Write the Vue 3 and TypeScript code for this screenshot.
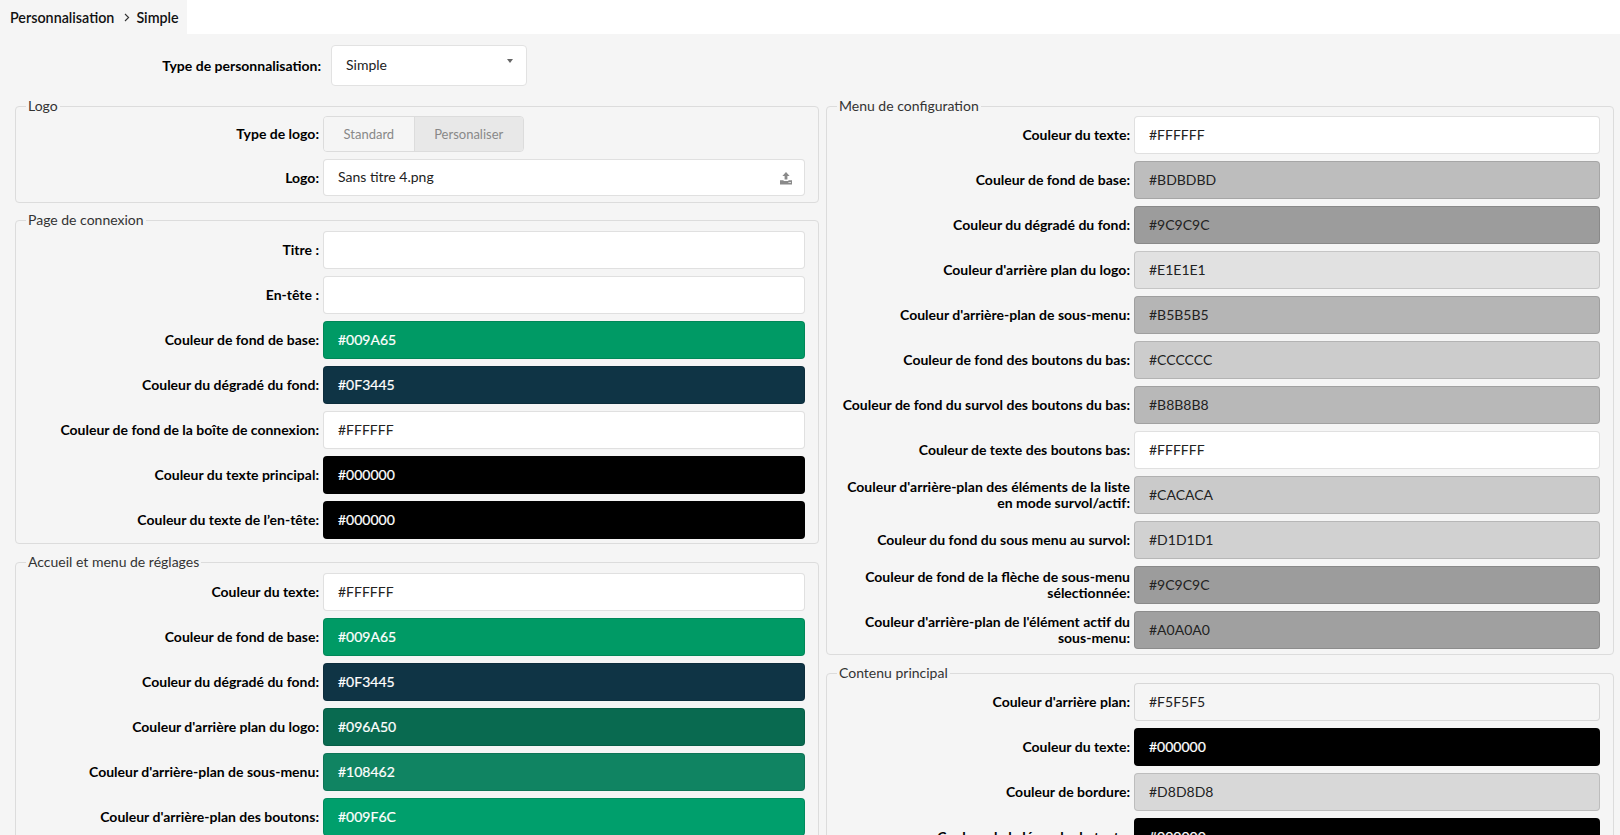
<template>
  <div class="page">
    <div class="topbar">
      <div class="crumbs">
        <span>Personnalisation</span>
        <svg class="crumbs__sep" width="6" height="9" viewBox="0 0 6 9">
          <path d="M1 1 L4.6 4.5 L1 8" fill="none" stroke="#333" stroke-width="1.1" />
        </svg>
        <span>Simple</span>
      </div>
    </div>

    <div class="type-row">
      <label class="type-row__label">Type de personnalisation:</label>
      <div class="select">
        <span>Simple</span>
        <i class="select__caret"></i>
      </div>
    </div>

    <div class="columns">
      <div class="column">
        <fieldset class="group group--logo">
          <legend>Logo</legend>
          <div class="row row--switch">
            <label>Type de logo:</label>
            <div class="switch">
              <span class="switch__item">Standard</span>
              <span class="switch__item switch__item--active">Personaliser</span>
            </div>
          </div>
          <div class="row">
            <label>Logo:</label>
            <div class="field field--file">
              <span>Sans titre 4.png</span>
              <svg class="upload" width="14" height="14" viewBox="0 0 14 14">
                <path d="M7 1 L10.6 5 H8.4 V8.6 H5.6 V5 H3.4 Z" fill="#8a8a8a" />
                <path d="M1 9.2 H4.6 V10 H9.4 V9.2 H13 V13.4 H1 Z" fill="#8a8a8a" />
                <rect x="9.4" y="11" width="2.6" height="0.9" fill="#e4e4e4" />
              </svg>
            </div>
          </div>
        </fieldset>

        <fieldset v-for="group in leftGroups" :key="group.title" class="group group--tall">
          <legend>{{ group.title }}</legend>
          <div v-for="row in group.rows" :key="row.label" class="row">
            <label>{{ row.label }}</label>
            <div class="field" :class="{ 'field--dark': isDark(row.value) }" :style="fieldStyle(row.value)">{{ row.value }}</div>
          </div>
        </fieldset>
      </div>

      <div class="column column--right">
        <fieldset v-for="group in rightGroups" :key="group.title" class="group">
          <legend>{{ group.title }}</legend>
          <div v-for="row in group.rows" :key="row.label" class="row">
            <label>{{ row.label }}</label>
            <div class="field" :class="{ 'field--dark': isDark(row.value) }" :style="fieldStyle(row.value)">{{ row.value }}</div>
          </div>
        </fieldset>
      </div>
    </div>
  </div>
</template>

<script setup lang="ts">
interface Row {
  label: string;
  value: string;
}

interface Group {
  title: string;
  rows: Row[];
}

const leftGroups: Group[] = [
  {
    title: 'Page de connexion',
    rows: [
      { label: 'Titre :', value: '' },
      { label: 'En-tête :', value: '' },
      { label: 'Couleur de fond de base:', value: '#009A65' },
      { label: 'Couleur du dégradé du fond:', value: '#0F3445' },
      { label: 'Couleur de fond de la boîte de connexion:', value: '#FFFFFF' },
      { label: 'Couleur du texte principal:', value: '#000000' },
      { label: 'Couleur du texte de l’en-tête:', value: '#000000' },
    ],
  },
  {
    title: 'Accueil et menu de réglages',
    rows: [
      { label: 'Couleur du texte:', value: '#FFFFFF' },
      { label: 'Couleur de fond de base:', value: '#009A65' },
      { label: 'Couleur du dégradé du fond:', value: '#0F3445' },
      { label: "Couleur d'arrière plan du logo:", value: '#096A50' },
      { label: "Couleur d'arrière-plan de sous-menu:", value: '#108462' },
      { label: "Couleur d'arrière-plan des boutons:", value: '#009F6C' },
    ],
  },
];

const rightGroups: Group[] = [
  {
    title: 'Menu de configuration',
    rows: [
      { label: 'Couleur du texte:', value: '#FFFFFF' },
      { label: 'Couleur de fond de base:', value: '#BDBDBD' },
      { label: 'Couleur du dégradé du fond:', value: '#9C9C9C' },
      { label: "Couleur d'arrière plan du logo:", value: '#E1E1E1' },
      { label: "Couleur d'arrière-plan de sous-menu:", value: '#B5B5B5' },
      { label: 'Couleur de fond des boutons du bas:', value: '#CCCCCC' },
      { label: 'Couleur de fond du survol des boutons du bas:', value: '#B8B8B8' },
      { label: 'Couleur de texte des boutons bas:', value: '#FFFFFF' },
      { label: "Couleur d'arrière-plan des éléments de la liste en mode survol/actif:", value: '#CACACA' },
      { label: 'Couleur du fond du sous menu au survol:', value: '#D1D1D1' },
      { label: 'Couleur de fond de la flèche de sous-menu sélectionnée:', value: '#9C9C9C' },
      { label: "Couleur d'arrière-plan de l'élément actif du sous-menu:", value: '#A0A0A0' },
    ],
  },
  {
    title: 'Contenu principal',
    rows: [
      { label: "Couleur d'arrière plan:", value: '#F5F5F5' },
      { label: 'Couleur du texte:', value: '#000000' },
      { label: 'Couleur de bordure:', value: '#D8D8D8' },
      { label: 'Couleur de la légende du texte:', value: '#000000' },
    ],
  },
];

// texte blanc sur les fonds sombres, foncé sinon
function isDark(value: string): boolean {
  if (!value) return false;
  const r = parseInt(value.slice(1, 3), 16);
  const g = parseInt(value.slice(3, 5), 16);
  const b = parseInt(value.slice(5, 7), 16);
  return (r * 299 + g * 587 + b * 114) / 1000 < 128;
}

function fieldStyle(value: string) {
  return value ? { backgroundColor: value } : {};
}
</script>

<style>
html,
body {
  margin: 0;
  height: 100%;
  overflow: hidden;
  background: #f5f5f5;
}
</style>

<style scoped>
.page {
  height: 835px;
  overflow: hidden;
  font-family: Lato, "Open Sans", sans-serif;
  font-size: 14px;
  color: #000;
  background: #f5f5f5;
}

.topbar {
  height: 34px;
  background: #fff;
}

.crumbs {
  display: inline-flex;
  align-items: center;
  gap: 8px;
  box-sizing: border-box;
  width: 187px;
  height: 34px;
  padding-left: 10px;
  background: #f5f5f5;
  font-size: 14.3px;
  font-weight: 600;
  color: #111;
}

.crumbs__sep {
  margin-left: 2px;
  margin-right: -2px;
}

.type-row {
  display: flex;
  align-items: center;
  height: 41px;
  margin-top: 11px;
}

.type-row__label {
  width: 321px;
  text-align: right;
  font-weight: 700;
}

.select {
  display: flex;
  align-items: center;
  justify-content: space-between;
  box-sizing: border-box;
  width: 196px;
  height: 41px;
  margin-left: 10px;
  padding: 0 13px 2px 14px;
  background: #fff;
  border: 1px solid #e2e2e2;
  border-radius: 4px;
  color: #222;
}

.select__caret {
  width: 0;
  height: 0;
  margin-bottom: 7px;
  border-left: 3.5px solid transparent;
  border-right: 3.5px solid transparent;
  border-top: 4px solid #666;
}

.columns {
  display: grid;
  grid-template-columns: 804px 788px;
  column-gap: 7px;
  margin-left: 15px;
  margin-top: 10px;
}

.column {
  display: flex;
  flex-direction: column;
  gap: 7px;
  min-width: 0;
}

.column--right {
  gap: 8px;
}

.group {
  margin: 0;
  padding: 0 13px 5px 0;
  border: 1px solid #dcdcdc;
  border-radius: 4px;
  min-width: 0;
}

.group legend {
  margin-left: 10px;
  padding: 0 2px;
  line-height: 20px;
  color: #333;
}

.group--logo {
  padding-bottom: 6px;
  margin-bottom: -1px;
}

.group--tall {
  padding-bottom: 4px;
}

.group--tall legend {
  line-height: 22px;
}

.row {
  display: flex;
  align-items: center;
  height: 38px;
  margin-bottom: 7px;
}

.row:last-child {
  margin-bottom: 0;
}

.row label {
  box-sizing: border-box;
  flex: 0 0 303px;
  padding-left: 10px;
  text-align: right;
  font-weight: 700;
  line-height: 16px;
}

.group--logo .row {
  height: 36px;
}

.group--logo .row:last-child {
  height: 37px;
}

.group--logo .field {
  height: 37px;
}

.field {
  flex: 1;
  display: flex;
  align-items: center;
  box-sizing: border-box;
  height: 38px;
  margin-left: 4px;
  padding: 0 14px 2px;
  background: #fff;
  border: 1px solid rgba(0, 0, 0, 0.12);
  border-radius: 4px;
  color: #222;
}

.field--dark {
  color: #fff;
  -webkit-text-stroke: 0.2px #fff;
}

.field--file {
  justify-content: space-between;
}

.upload {
  margin-right: -3px;
  margin-top: 3px;
}

.switch {
  display: flex;
  height: 36px;
  margin-left: 4px;
  border: 1px solid #dcdcdc;
  border-radius: 4px;
  box-sizing: border-box;
  overflow: hidden;
  font-size: 13px;
  color: #888;
}

.switch__item {
  display: flex;
  align-items: center;
  padding: 0 19.5px;
  background: #f5f5f5;
}

.switch__item--active {
  background: #e8e8e8;
  border-left: 1px solid #dcdcdc;
}
</style>
